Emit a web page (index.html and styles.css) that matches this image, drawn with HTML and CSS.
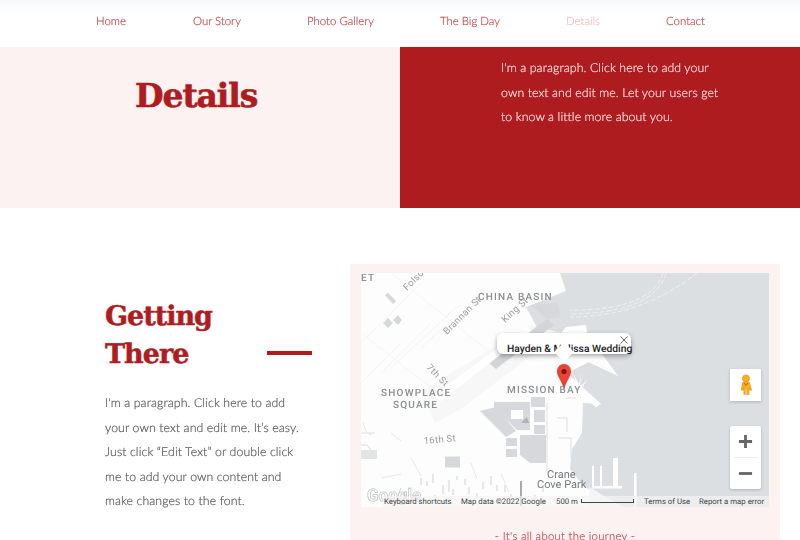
FILE: index.html
```html
<!DOCTYPE html>
<html lang="en">
<head>
<meta charset="utf-8">
<title>Details</title>
<link rel="stylesheet" href="styles.css">
</head>
<body>
<nav class="nav">
  <a class="nav-link">Home</a>
  <a class="nav-link">Our Story</a>
  <a class="nav-link">Photo Gallery</a>
  <a class="nav-link">The Big Day</a>
  <a class="nav-link is-current">Details</a>
  <a class="nav-link">Contact</a>
</nav>
<section class="hero">
  <div class="hero-left"><h1 class="hero-title">Details</h1></div>
  <div class="hero-right">
    <p class="hero-text">I'm a paragraph. Click here to add your<br>own text and edit me. Let your users get<br>to know a little more about you.</p>
  </div>
</section>
<section class="content">
  <div class="info">
    <div class="info-head">
      <h2 class="info-title">Getting<br>There</h2>
      <span class="info-rule"></span>
    </div>
    <p class="info-text">I'm a paragraph. Click here to add<br>your own text and edit me. It’s easy.<br>Just click “Edit Text” or double click<br>me to add your own content and<br>make changes to the font.</p>
  </div>
  <div class="map-card">
    <div class="map">
      <svg class="map-art" viewBox="0 0 408 234" width="408" height="234" aria-hidden="true">
        <rect width="408" height="234" fill="#fdfdfd"/>
        <!-- water -->
        <path d="M199 0H408V234H262L236 222L222 212L209 196L211 176L221 160L222 130L240 131L206 100L225 88L257 103L232 87L226 60L180 62L165 34L205 18Z" fill="#dcdfe2"/>
        <!-- white land near the pin and the pier -->
        <path d="M205 54L225 52L226 60L257 103L232 87L206 100L200 60Z" fill="#fff"/>
        <path d="M214 108L240 131L235 134L209 114Z" fill="#fff"/>
        <path d="M212 100l6 12l2 -12l-1 14l8 -8l-9 12z" fill="#fff"/>
        <!-- piers -->
        <path d="M231 193h2v22h-2z M239 193h2v20h-2z M252 185h5v30h-5z M231 213h30v2.500h-30z M273 200h2.500v34h-2.500z" fill="#fff"/>
        <path d="M228 214L262 234H228Z" fill="#f4f5f6"/>
        <!-- dashed shipping lines -->
        <g fill="none" stroke="#eef0f1" stroke-width="1" stroke-dasharray="5 2">
          <path d="M302 0C295 25 260 38 209 37"/>
          <path d="M305 0C298 27 262 41 209 41"/>
          <path d="M336 0C300 28 260 44 209 44"/>
        </g>
        <!-- channel -->
        <path d="M60 118L170 52L200 60L100 136L74 150Z" fill="#f7f7f7"/>
        <path d="M186 46L193 52L135 96L127 89Z" fill="#d3d5d8"/>
        <path d="M170 32L196 30L200 44L186 46Z" fill="#d6d8db"/>
        <path d="M72 122L166 54L170 58L80 128Z" fill="#fff"/>
        <!-- faint street texture -->
        <g fill="none" stroke="#f5f5f5" stroke-width="1">
          <path d="M30 0L130 80 M0 60L90 130 M100 30L30 95 M60 10L0 70 M0 110L40 70 M70 50L20 100 M120 20L60 75"/>
        </g>
        <!-- buildings -->
        <g fill="#d6d8db">
          <path d="M27 45l5 5l-5 5l-5-5z M37 42l4 5l-4 5l-5-5z M24 22l3-2l8 8l-3 3z"/>
          <path d="M119 138l16-4l20 24l-10 6z"/>
          <path d="M133 129h36v28h-13l-12-12h-11z"/>
          <path d="M173 137h11v12h-11z M173 152h11v9h-11z M170 124h14v10h-14z"/>
          <path d="M159 162h26v28h-16l-10-8z"/>
          <path d="M145 165h11v8h-11z M145 176h11v8h-11z"/>
          <path d="M84 183.500h15v11h-15z"/>
          <path d="M0 177h16v9h-16z" opacity=".7"/>
        </g>
        <path d="M150 137h12v9h-12z" fill="#fff"/>
        <path d="M166 144l-6 6h8z" fill="#b0b2b5"/>
        <g fill="none" stroke="#dcdddf" stroke-width="1">
          <path d="M0 172h6l6 8 M0 160l14 0 M196 145h10v14 M198 165h12v20 M205 125h10"/>
          <path d="M186 130v70" stroke="#efefef" stroke-width="2"/>
        </g>
        <!-- dark scattered blocks, lower left -->
        <g class="m-blocks" fill="none" stroke="#8f9194" stroke-width="1">
          <path d="M60 205v7 M66 208v5 M72 201v9 M74 222v6 M82 212v9 M88 207v12 M92 216v6 M104 206v6 M108 214v7 M122 209v7 M130 203v9 M136 212v6 M144 212v7 M40 215l-3 7 M96 203v4"/>
          <path d="M20 224v5 M30 222v5 M50 224v5 M116 220v6 M150 221v5 M174 222v6 M182 214v5"/>
        </g>
        <path d="M160 208v25" stroke="#6e7073" stroke-width="1.200"/>
        <g fill="none" stroke="#e8e9ea" stroke-width="1">
          <path d="M2 150l4 10l5 2 M30 160l10 8 M140 200l8 20 M50 185l10 18 M110 190l6 16 M20 205l20-4"/>
        </g>
        <!-- labels -->
        <text class="m-area" x="117" y="27">CHINA BASIN</text>
        <text class="m-area" x="20" y="123">SHOWPLACE</text>
        <text class="m-area" x="32" y="135">SQUARE</text>
        <text class="m-area" x="146" y="120">MISSION BAY</text>
        <text class="m-area" x="0" y="8">ET</text>
        <text class="m-road" transform="translate(46 18) rotate(-45)">Folsom</text>
        <text class="m-road" transform="translate(86 62) rotate(-45)">Brannan St</text>
        <text class="m-road" transform="translate(144 50) rotate(-42)">King St</text>
        <text class="m-road" transform="translate(65 95) rotate(45)">7th St</text>
        <text class="m-road" transform="translate(63 171) rotate(-5)">16th St</text>
        <text class="m-place" x="186" y="204.500">Crane</text>
        <text class="m-place" x="176" y="214.500">Cove Park</text>
        <text class="m-logo" x="6" y="228">Google</text>
        <!-- pin -->
        <path d="M203 91c-4 0-7 3-7 7.500c0 5.500 5 9.500 7 18c2-8.500 7-12.500 7-18c0-4.500-3-7.500-7-7.500z" fill="#ea4335"/>
        <circle cx="203" cy="98.500" r="2.600" fill="#7f1513"/>
      </svg>
      <div class="bubble">
        <span class="bubble-title">Hayden &amp; Melissa Wedding</span>
        <svg class="bubble-close" viewBox="0 0 8 8" width="8" height="8" aria-hidden="true"><path d="M.5.500l7 7M7.500.500l-7 7" stroke="#666" stroke-width="1" fill="none"/></svg>
        <span class="bubble-tail"></span>
      </div>
      <div class="pegman">
        <svg viewBox="0 0 16 24" width="14" height="23" aria-hidden="true">
          <circle cx="8" cy="5" r="4" fill="#fbb116" stroke="#c98b12" stroke-width=".6"/>
          <path d="M4 9.500h8l2.500 9h-2.300l-.7-3.200v8.200h-2.800v-7h-1.400v7H5.500v-8.200L4.800 18.500H2.500z" fill="#fbb116" stroke="#c98b12" stroke-width=".5"/>
          <path d="M5.500 10l2.500 3l2.500-3" fill="none" stroke="#d9652a" stroke-width="1.200"/>
        </svg>
      </div>
      <div class="zoom">
        <span class="zoom-btn"><svg viewBox="0 0 16 16" width="15" height="15" aria-hidden="true"><path d="M6.500 1h3v5.500H15v3H9.500V15h-3V9.500H1v-3h5.500z" fill="#666"/></svg></span>
        <span class="zoom-line"></span>
        <span class="zoom-btn"><svg viewBox="0 0 16 16" width="15" height="15" aria-hidden="true"><path d="M1 6.500h14v3H1z" fill="#666"/></svg></span>
      </div>
      <div class="attrib">
        <span class="attrib-item attrib-keys">Keyboard shortcuts</span>
        <span class="attrib-item attrib-data">Map data ©2022 Google</span>
        <span class="attrib-item attrib-scale">500 m<i class="scale-bar"></i></span>
        <span class="attrib-item attrib-terms">Terms of Use</span>
        <span class="attrib-item attrib-error">Report a map error</span>
      </div>
    </div>
    <p class="map-caption">- It's all about the journey -</p>
  </div>
</section>
</body>
</html>
```
FILE: styles.css
```css
* { box-sizing: border-box; }
html, body { margin: 0; height: 540px; overflow: hidden; background: #fff; }
body { font-family: "Lato", "Open Sans", sans-serif; text-rendering: geometricPrecision; }
h1, h2, p { margin: 0; }

.nav {
  height: 47px;
  display: flex;
  align-items: flex-start;
  padding: 14px 0 0 96px;
  background: linear-gradient(#f7f8fa 0, #fff 14px);
  font-size: 11.400px;
  font-weight: 300;
  line-height: 15px;
  -webkit-text-stroke: .2px currentColor;
}
.nav-link { color: #c4474d; white-space: nowrap; opacity: .98; }
.nav-link:nth-child(1) { width: 97px; }
.nav-link:nth-child(2) { width: 114px; }
.nav-link:nth-child(3) { width: 133px; }
.nav-link:nth-child(4) { width: 126px; }
.nav-link:nth-child(5) { width: 100px; }
.is-current { color: #f0c0c4; }

.hero { height: 161px; display: grid; grid-template-columns: 400px 400px; }
.hero-left { background: #fdf2f2; padding: 29px 0 0 135px; }
.hero-title {
  font-family: "DejaVu Serif", serif;
  font-weight: 700;
  font-size: 33px;
  line-height: 40px;
  letter-spacing: -1.100px;
  color: #ae1c1f;
  -webkit-text-stroke: .6px #ae1c1f;
}
.hero-right { background: #ae1c1f; padding: 9px 0 0 101px; }
.hero-text { color: #fbe6e6; font-weight: 300; font-size: 12.300px; line-height: 24.500px; letter-spacing: .1px; white-space: nowrap; -webkit-text-stroke: .2px currentColor; opacity: .98; }

.content { display: flex; align-items: flex-start; padding: 56px 0 0 105px; }
.info { width: 245px; padding-top: 36px; }
.info-head { position: relative; height: 76px; }
.info-title {
  font-family: "DejaVu Serif", serif;
  font-weight: 700;
  font-size: 27px;
  line-height: 38px;
  letter-spacing: -1px;
  color: #ae1c1f;
  -webkit-text-stroke: .5px #ae1c1f;
  position: relative;
  top: -2px;
}
.info-rule { position: absolute; left: 162px; top: 51px; width: 45px; height: 4px; background: #ae1c1f; }
.info-text { margin-top: 15px; color: #555; font-weight: 300; font-size: 12.300px; line-height: 24.600px; letter-spacing: .1px; white-space: nowrap; -webkit-text-stroke: .2px currentColor; opacity: .98; }

.map-card { width: 430px; height: 277px; background: #fdf2f2; padding-top: 8.500px; }
.map { position: relative; width: 408px; height: 234px; margin-left: 11px; overflow: hidden; }
.map-art { display: block; filter: blur(.3px); }
.m-blocks { opacity: .4; }
.m-area { font: 500 10px "Roboto", sans-serif; letter-spacing: 1.200px; fill: #8b8d90; }
.m-road { font: 400 9.500px "Roboto", sans-serif; fill: #9a9c9f; letter-spacing: .3px; }
.m-place { font: 400 11px "Roboto", sans-serif; fill: #77797c; }
.m-logo { font: 700 17px "Roboto", sans-serif; fill: #fff; stroke: #c4c6c8; stroke-width: .8px; }

.bubble {
  position: absolute;
  left: 136px;
  top: 60.500px;
  width: 134px;
  height: 21px;
  background: #fff;
  border-radius: 6px;
  box-shadow: 0 2px 5px rgba(0, 0, 0, .35);
  padding: 10px 0 0 10px;
  font: 500 10.300px/12px "Roboto", sans-serif;
  color: #222;
  white-space: nowrap;
}
.bubble-close { position: absolute; right: 3px; top: 3px; }
.bubble-tail {
  position: absolute;
  left: 60px;
  top: 12px;
  width: 14px;
  height: 14px;
  background: #fff;
  transform: rotate(45deg);
}

.pegman {
  position: absolute;
  left: 369px;
  top: 96px;
  width: 31px;
  height: 32px;
  background: #fff;
  box-shadow: 0 1px 3px rgba(0, 0, 0, .2);
  display: flex;
  align-items: center;
  justify-content: center;
}
.zoom {
  position: absolute;
  left: 369px;
  top: 153px;
  width: 31px;
  height: 63px;
  background: #fff;
  border-radius: 2px;
  box-shadow: 0 1px 3px rgba(0, 0, 0, .2);
  display: flex;
  flex-direction: column;
  align-items: center;
}
.zoom-btn { height: 31px; display: flex; align-items: center; justify-content: center; }
.zoom-line { width: 24px; height: 1px; background: #ececec; }

.attrib {
  position: absolute;
  left: 22px;
  right: 0;
  bottom: 0;
  height: 11px;
  display: flex;
  background: rgba(245, 245, 245, .65);
  font: 400 7.800px/11px "Roboto", sans-serif;
  color: #444;
  white-space: nowrap;
}
.attrib-keys { margin-left: 1px; width: 77px; }
.attrib-data { width: 95px; }
.attrib-scale { display: flex; align-items: center; gap: 3px; width: 88px; }
.attrib-terms { width: 55px; }
.scale-bar { display: block; width: 53px; height: 4px; border: 1px solid #444; border-top: 0; }

.map-caption { margin-top: 22px; text-align: center; color: #c4474d; font-weight: 300; font-size: 11.300px; line-height: 16px; letter-spacing: .3px; -webkit-text-stroke: .2px currentColor; opacity: .98; }
```
